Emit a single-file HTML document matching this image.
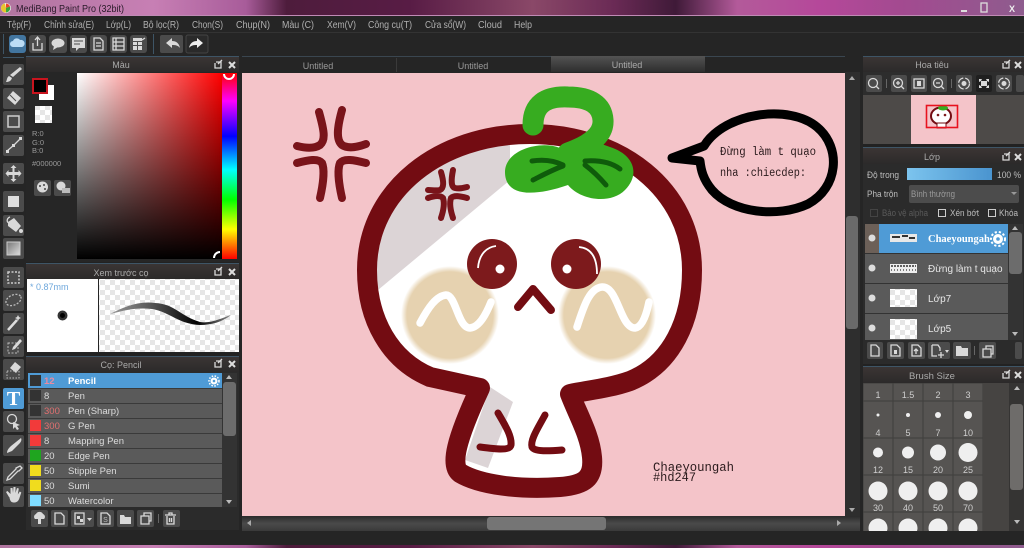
<!DOCTYPE html>
<html><head><meta charset="utf-8"><style>
html,body{margin:0;padding:0;width:1024px;height:548px;overflow:hidden;background:#252525}
svg{display:block}
text{font-family:"Liberation Sans","DejaVu Sans",sans-serif;font-size:9.5px;fill:#bdbdbd}
.m{font-size:10px;fill:#b0b0b0}
.c{text-anchor:middle}
.b{fill:#4b4b4b}
.i{fill:#d9d9d9}
.s{fill:none;stroke:#d9d9d9;stroke-width:1.3}
.w{font-size:9.5px;fill:#dcdcdc}
.d{fill:#565452;stroke:#3f3e3c;stroke-width:1}
.l{font-size:9px;fill:#cfcfcf;text-anchor:middle}
.o{fill:#efefef}
</style></head><body>
<svg width="1024" height="548" viewBox="0 0 1024 548" xmlns="http://www.w3.org/2000/svg">
<defs>
<linearGradient id="tb" x1="0" x2="1" y1="0" y2="0">
<stop offset="0" stop-color="#b0759f"/><stop offset=".15" stop-color="#c77fb4"/><stop offset=".24" stop-color="#a85c9a"/><stop offset=".28" stop-color="#4e1c3c"/><stop offset=".4" stop-color="#581c45"/><stop offset=".52" stop-color="#8a4868"/><stop offset=".6" stop-color="#6a2a55"/><stop offset=".66" stop-color="#3f1a38"/><stop offset=".72" stop-color="#b35a9a"/><stop offset=".8" stop-color="#b5489a"/><stop offset=".88" stop-color="#a34a90"/><stop offset="1" stop-color="#8e5c8e"/>
</linearGradient>
<linearGradient id="sv1" x1="0" x2="1" y1="0" y2="0"><stop offset="0" stop-color="#fff"/><stop offset="1" stop-color="#f00"/></linearGradient>
<linearGradient id="sv2" x1="0" x2="0" y1="0" y2="1"><stop offset="0" stop-color="#000" stop-opacity="0"/><stop offset="1" stop-color="#000"/></linearGradient>
<linearGradient id="hue" x1="0" x2="0" y1="0" y2="1">
<stop offset="0" stop-color="#f00"/><stop offset=".15" stop-color="#f0f"/><stop offset=".34" stop-color="#00f"/><stop offset=".52" stop-color="#0ff"/><stop offset=".68" stop-color="#0f0"/><stop offset=".84" stop-color="#ff0"/><stop offset="1" stop-color="#f00"/>
</linearGradient>
<linearGradient id="hd" x1="0" x2="0" y1="0" y2="1"><stop offset="0" stop-color="#3b3534"/><stop offset="1" stop-color="#2c2a2a"/></linearGradient>
<linearGradient id="tab" x1="0" x2="0" y1="0" y2="1"><stop offset="0" stop-color="#535353"/><stop offset="1" stop-color="#2e2e2e"/></linearGradient>
<linearGradient id="sb" x1="0" x2="0" y1="0" y2="1"><stop offset="0" stop-color="#2b2b2b"/><stop offset=".5" stop-color="#4a4a4a"/><stop offset="1" stop-color="#3a3a3a"/></linearGradient>
<linearGradient id="op" x1="0" x2="1" y1="0" y2="0"><stop offset="0" stop-color="#7cc4ee"/><stop offset="1" stop-color="#4a94cf"/></linearGradient>
<linearGradient id="gr" x1="0" x2="1" y1="0" y2="1"><stop offset="0" stop-color="#777"/><stop offset="1" stop-color="#ddd"/></linearGradient>
<linearGradient id="st" x1="0" x2="1" y1="0" y2="0"><stop offset="0" stop-color="#999"/><stop offset=".35" stop-color="#555"/><stop offset=".72" stop-color="#000"/><stop offset="1" stop-color="#888"/></linearGradient>
<radialGradient id="bl"><stop offset="0" stop-color="#e6d2b0"/><stop offset=".88" stop-color="#e6d2b0"/><stop offset="1" stop-color="#e6d2b0" stop-opacity="0"/></radialGradient>
<pattern id="ck" width="10" height="10" patternUnits="userSpaceOnUse"><rect width="10" height="10" fill="#fff"/><rect width="5" height="5" fill="#e6e6e6"/><rect x="5" y="5" width="5" height="5" fill="#e6e6e6"/></pattern>
<clipPath id="gridclip"><rect x="863" y="383" width="120" height="148"/></clipPath>
<clipPath id="lclip"><rect x="865" y="224" width="143" height="116"/></clipPath>
</defs>

<!-- window chrome -->
<rect width="1024" height="548" fill="#252525"/>
<rect width="1024" height="15" fill="url(#tb)"/>
<rect y="15" width="1024" height="1" fill="#c08ab5"/>
<rect y="545" width="1024" height="3" fill="url(#tb)"/>
<circle cx="6" cy="8" r="5" fill="#f2f2f2"/><path d="M6 3.5a4.5 4.5 0 0 1 4 3L6 8z" fill="#e8452c"/><path d="M10 6.5a4.5 4.5 0 0 1-4 6L6 8z" fill="#3aa63a"/><path d="M6 12.5a4.5 4.5 0 0 1-1-9L6 8z" fill="#e8c52c"/>
<text x="16" y="12" textLength="108" lengthAdjust="spacingAndGlyphs" style="font-size:10px;fill:#2a1a2a">MediBang Paint Pro (32bit)</text>
<rect x="961" y="10" width="6" height="2" fill="#ddd"/><rect x="981" y="3" width="6" height="9" fill="none" stroke="#ddd" stroke-width="1.3"/><text x="1012" y="12" class="c" style="font-size:9px;fill:#eee;font-weight:bold">X</text>

<!-- menu -->
<text class="m" x="7" y="28" textLength="24" lengthAdjust="spacingAndGlyphs">Tệp(F)</text><text class="m" x="44" y="28" textLength="50" lengthAdjust="spacingAndGlyphs">Chỉnh sửa(E)</text><text class="m" x="106" y="28" textLength="25" lengthAdjust="spacingAndGlyphs">Lớp(L)</text><text class="m" x="143" y="28" textLength="36" lengthAdjust="spacingAndGlyphs">Bộ lọc(R)</text><text class="m" x="192" y="28" textLength="31" lengthAdjust="spacingAndGlyphs">Chọn(S)</text><text class="m" x="236" y="28" textLength="34" lengthAdjust="spacingAndGlyphs">Chụp(N)</text><text class="m" x="282" y="28" textLength="32" lengthAdjust="spacingAndGlyphs">Màu (C)</text><text class="m" x="327" y="28" textLength="29" lengthAdjust="spacingAndGlyphs">Xem(V)</text><text class="m" x="368" y="28" textLength="44" lengthAdjust="spacingAndGlyphs">Công cụ(T)</text><text class="m" x="425" y="28" textLength="41" lengthAdjust="spacingAndGlyphs">Cửa sổ(W)</text><text class="m" x="478" y="28" textLength="24" lengthAdjust="spacingAndGlyphs">Cloud</text><text class="m" x="514" y="28" textLength="18" lengthAdjust="spacingAndGlyphs">Help</text>
<rect y="32" width="1024" height="1" fill="#333"/>

<!-- toolbar -->
<rect x="3" y="34" width="1" height="20" fill="#3e5566"/><rect x="153" y="34" width="1" height="20" fill="#3e5566"/>
<rect x="9" y="35" width="17" height="18" rx="3" fill="#42759f"/><path d="M13 47a3 3 0 0 1 0-6 4 4 0 0 1 7-1 3.500 3.500 0 0 1 2 7z" fill="#bcdcf5"/>
<rect class="b" x="29" y="35" width="17" height="18" rx="3"/><path class="s" d="M33 43v7h9v-7M37.500 46v-8M35 40l2.500-3 2.500 3"/>
<rect class="b" x="49" y="35" width="18" height="18" rx="3"/><ellipse class="i" cx="58" cy="43" rx="6.500" ry="4.500"/><path class="i" d="M54 46l-1 4 5-3z"/>
<rect class="b" x="70" y="35" width="17" height="18" rx="3"/><path class="i" d="M72 38h13v10h-6l-3 3v-3h-4z"/><path d="M74 41h9M74 44h6" stroke="#4b4b4b"/>
<rect class="b" x="90" y="35" width="17" height="18" rx="3"/><path class="s" d="M94 38h6l3 3v9h-9zM96 43h5M96 46h5"/>
<rect class="b" x="110" y="35" width="17" height="18" rx="3"/><path class="s" d="M113 38h11v12h-11zM113 42h11M113 46h11M116 38v12"/>
<rect class="b" x="130" y="35" width="17" height="18" rx="3"/><path class="i" d="M133 42h4v3h-4zM138 42h4v3h-4zM133 46h4v4h-4zM138 46h4v4h-4zM133 38h9v3h-9z"/><path class="s" d="M142 40l3-2"/>
<rect class="b" x="160" y="35" width="23" height="18" rx="2"/><path class="i" d="M166 43l6-5v3c4 0 7 2 8 7-2-2.500-4-3-8-3v3z"/>
<rect x="186" y="35" width="22" height="18" rx="2" fill="#2a2a2a" stroke="#444"/><path fill="#eee" d="M203 43l-6-5v3c-4 0-7 2-8 7 2-2.500 4-3 8-3v3z"/>

<!-- tabs -->
<rect x="242" y="56" width="603" height="1" fill="#3a4650"/>
<rect x="396" y="58" width="1" height="14" fill="#3a3a3a"/>
<rect x="551" y="56" width="154" height="16" fill="url(#tab)"/>
<text class="c" x="318" y="69" style="font-size:9px;fill:#999">Untitled</text><text class="c" x="473" y="69" style="font-size:9px;fill:#999">Untitled</text><text class="c" x="627" y="68" style="font-size:9px;fill:#aaa">Untitled</text>

<!-- canvas -->
<rect x="242" y="73" width="603" height="443" fill="#f4c4c9"/>

<!-- head -->
<path fill="#fff" d="M367 270C367 190 440 134 530 134C620 134 692 190 692 270C692 320 672 364 630 381C610 388 590 390 570 394C578 415 590 435 592 457C594 478 585 485 560 487C520 490 480 485 460 473C450 465 456 440 480 388L430 377C390 360 367 320 367 270Z"/>
<path fill="#dcd4d6" d="M378 290L510 180V140L430 150L372 230Z"/>
<path fill="#dcd4d6" d="M490 387L513 402L488 468L465 460Z"/>
<circle cx="450" cy="315" r="49" fill="url(#bl)"/><circle cx="607" cy="315" r="49" fill="url(#bl)"/>
<path fill="none" stroke="#730c12" stroke-width="20" stroke-linejoin="round" d="M367 270C367 190 440 134 530 134C620 134 692 190 692 270C692 320 672 364 630 381C610 388 590 390 570 394C578 415 590 435 592 457C594 478 585 485 560 487C520 490 480 485 460 473C450 465 456 440 480 388L430 377C390 360 367 320 367 270Z"/>
<path fill="none" stroke="#fff" stroke-width="7.500" stroke-linecap="round" stroke-linejoin="round" d="M420 323C428 308 436 296 446 295C456 295 458 328 470 328C480 327 487 312 491 302"/>
<path fill="none" stroke="#fff" stroke-width="7.500" stroke-linecap="round" stroke-linejoin="round" d="M577 327C584 305 590 288 602 287C618 286 620 328 635 328C643 327 647 312 649 302"/>
<circle cx="492" cy="264" r="25" fill="#7d1a1c"/><circle cx="576" cy="264" r="25" fill="#7d1a1c"/>
<circle cx="500" cy="269" r="4.500" fill="#fff"/><circle cx="567" cy="269" r="4.500" fill="#fff"/>
<path fill="none" stroke="#fff" stroke-width="1.800" d="M478 268C479 254 487 247 496 246"/>
<path fill="none" stroke="#fff" stroke-width="1.800" d="M579 247C590 248 597 256 597 274"/>
<path fill="none" stroke="#730c12" stroke-width="8" stroke-linecap="round" stroke-linejoin="round" d="M518 307L533 289L551 310"/>
<path fill="none" stroke="#730c12" stroke-width="7" stroke-linecap="round" stroke-linejoin="round" d="M498 413C505 425 512 436 511 445C510 451 495 449 480 447"/>
<path fill="none" stroke="#730c12" stroke-width="7" stroke-linecap="round" stroke-linejoin="round" d="M545 415C538 428 530 440 532 447C534 452 550 451 562 450"/>
<!-- anger marks -->
<g fill="none" stroke="#79141a" stroke-width="8" stroke-linecap="round">
<path d="M319 112C324 130 326 140 320 145C314 149 305 148 297 146"/><path d="M342 110C337 128 336 140 342 145C348 149 358 147 366 144"/><path d="M297 163C308 160 318 158 322 163C325 170 323 185 320 198"/><path d="M366 163C354 160 344 158 340 163C337 170 339 185 342 198"/>
</g>
<g fill="none" stroke="#79141a" stroke-width="6" stroke-linecap="round">
<path d="M441 172C444 182 444 188 440 190C436 191 432 190 428 190"/><path d="M453 170C451 180 451 187 455 188C459 189 463 188 467 187"/><path d="M428 198C434 196 440 195 443 198C445 204 443 212 441 218"/><path d="M467 198C460 196 454 195 451 198C449 204 451 212 453 218"/>
</g>
<!-- leaf -->
<path fill="#37ac20" d="M560 148C540 140 505 150 505 172C505 195 530 198 568 185C580 200 610 205 625 190C640 175 635 155 610 147L585 138L570 150Z"/>
<path fill="none" stroke="#37ac20" stroke-width="21" stroke-linecap="round" stroke-linejoin="round" d="M533 125C533 105 545 96 568 97C590 97 602 105 603 120C604 135 590 145 568 153"/>
<g fill="none" stroke="#0f5c0b" stroke-width="5" stroke-linecap="round">
<path d="M532 161C545 159 555 161 563 165"/><path d="M563 166C552 170 541 176 533 180"/>
<path d="M585 161C600 160 612 163 620 169"/><path d="M585 165C593 171 600 178 606 185"/>
</g>
<!-- bubble -->
<path fill="none" stroke="#000" stroke-width="9" stroke-linejoin="round" stroke-linecap="round" d="M704 146C725 112 790 104 817 127C842 148 838 188 808 204C778 218 732 213 712 190C703 179 701 170 700 161L672 158Z"/>
<text x="720" y="155" textLength="96" lengthAdjust="spacingAndGlyphs" style="font-family:'Liberation Mono',monospace;font-size:11.500px;fill:#2a1a1c">Đừng làm t quạo</text>
<text x="720" y="176" textLength="86" lengthAdjust="spacingAndGlyphs" style="font-family:'Liberation Mono',monospace;font-size:11.500px;fill:#2a1a1c">nha :chiecdep:</text>
<text x="653" y="471" textLength="81" lengthAdjust="spacingAndGlyphs" style="font-family:'Liberation Mono',monospace;font-size:13px;fill:#2a1a1c">Chaeyoungah</text>
<text x="653" y="481" textLength="43" lengthAdjust="spacingAndGlyphs" style="font-family:'Liberation Mono',monospace;font-size:13px;fill:#2a1a1c">#hd247</text>

<!-- canvas scrollbars -->
<rect x="845" y="72" width="15" height="444" fill="#2e2e2e"/><rect x="846" y="216" width="12" height="113" rx="3" fill="#6a6a6a"/>
<path d="M849 80l3-4 3 4z" fill="#aaa"/><path d="M849 508l3 4 3-4z" fill="#aaa"/>
<rect x="242" y="516" width="618" height="15" fill="url(#sb)"/><rect x="487" y="517" width="119" height="13" rx="3" fill="#757575"/>
<path d="M247 523l4-3v6z" fill="#aaa"/><path d="M841 523l-4-3v6z" fill="#aaa"/>

<!-- tool column -->
<rect x="3" y="57" width="21" height="1" fill="#3e5566"/>
<g class="b">
<rect x="3" y="64" width="21" height="21" rx="2"/><rect x="3" y="88" width="21" height="21" rx="2"/><rect x="3" y="111" width="21" height="21" rx="2"/><rect x="3" y="135" width="21" height="21" rx="2"/><rect x="3" y="163" width="21" height="21" rx="2"/><rect x="3" y="191" width="21" height="21" rx="2"/><rect x="3" y="215" width="21" height="21" rx="2"/><rect x="3" y="238" width="21" height="21" rx="2"/><rect x="3" y="267" width="21" height="21" rx="2"/><rect x="3" y="290" width="21" height="21" rx="2"/><rect x="3" y="313" width="21" height="21" rx="2"/><rect x="3" y="336" width="21" height="21" rx="2"/><rect x="3" y="359" width="21" height="21" rx="2"/><rect x="3" y="411" width="21" height="21" rx="2"/><rect x="3" y="435" width="21" height="21" rx="2"/><rect x="3" y="463" width="21" height="21" rx="2"/><rect x="3" y="486" width="21" height="21" rx="2"/>
</g>
<rect x="3" y="388" width="21" height="21" rx="2" fill="#4f9bd6"/>
<path class="i" d="M20 67l2 2-9 8-3-2zM9 76l3 2c-1 3-3 4-6 4 1-2 1-5 3-6z"/>
<path class="i" d="M13 91l8 7-6 7-8-7z"/><path d="M10 95l6 6" stroke="#4b4b4b" stroke-width="1"/>
<rect x="8" y="116" width="11" height="11" fill="none" stroke="#d0d0d0" stroke-width="1.500"/>
<path class="s" d="M7 151l7-6 6-6" stroke-width="1.600"/><rect x="6" y="150" width="3" height="3" class="i"/><rect x="12" y="144" width="3" height="3" class="i"/><rect x="19" y="137" width="3" height="3" class="i"/>
<path class="i" d="M13.500 165l3 3h-2v4h4v-2l3 3.500-3 3.500v-2h-4v4h2l-3 3-3-3h2v-4h-4v2l-3-3.500 3-3.500v2h4v-4h-2z"/>
<rect x="8" y="196" width="11" height="11" fill="#dedede"/>
<path class="i" d="M8 222l6-4 7 8-5 6-8-6z"/><path d="M10 217c-3 1-4 5-1 6" class="s"/><circle cx="21" cy="231" r="2" class="i"/>
<rect x="7" y="242" width="13" height="13" fill="url(#gr)" stroke="#ccc"/>
<rect x="8" y="272" width="11" height="11" fill="none" stroke="#ccc" stroke-width="1.500" stroke-dasharray="2 1.500"/>
<ellipse cx="13.500" cy="300" rx="8" ry="5" transform="rotate(-25 13.500 300)" fill="none" stroke="#bbb" stroke-width="1.300" stroke-dasharray="2 1.500"/>
<path d="M8 330l9-10" stroke="#ddd" stroke-width="2.500"/><path d="M18 315l1 2 2 1-2 1-1 2-1-2-2-1 2-1z" class="i"/>
<rect x="8" y="343" width="10" height="10" fill="none" stroke="#bbb" stroke-dasharray="2 1.500"/><path class="i" d="M20 339l2 2-7 8-3 1 1-3z"/>
<path class="i" d="M15 362l6 5-5 6-6-5z"/><rect x="7" y="371" width="12" height="7" fill="none" stroke="#bbb" stroke-dasharray="1.500 1.500"/>
<text x="13.500" y="405" text-anchor="middle" style="font-family:'Liberation Serif',serif;font-size:20px;font-weight:bold;fill:#fff">T</text>
<circle cx="12" cy="419" r="4.500" class="s"/><path class="i" d="M13 422l7 3-3 1 2 3-2 1-2-3-2 2z"/>
<path class="i" d="M21 438c1 2 0 4-2 6l-7 7-5 2c0-3 2-5 4-7z"/>
<path class="s" d="M20 466l2 2-3 3-1 0-8 8-3 1 1-3 8-8v-1z"/>
<path class="i" d="M9 497l-3-5 1.500-1 3 3 0-6 2 0 .5 5 .5-6 2 0 0 6 1.500-5 1.800.5-1 6 2-3 1.500 1-2 6c-1 3-3 4-5 4-3 0-4-1-5-5.500z"/>

<!-- Panels: colour -->
<rect x="26" y="56" width="213" height="1" fill="#3e5566"/>
<rect x="26" y="57" width="213" height="15" fill="url(#hd)"/>
<text class="c" x="121" y="68" style="font-size:9px;fill:#aaa">Màu</text>
<path class="s" d="M216 62h5v6h-6v-5M218 64l4-4" stroke-width="1"/><path d="M229 62l6 6M235 62l-6 6" stroke="#ddd" stroke-width="2"/>
<rect x="26" y="72" width="213" height="190" fill="#262626"/>
<rect x="77" y="73" width="145" height="186" fill="url(#sv1)"/><rect x="77" y="73" width="145" height="186" fill="url(#sv2)"/>
<rect x="222" y="73" width="15" height="186" fill="url(#hue)"/>
<path d="M224 74a5 5 0 0 0 10 0" fill="none" stroke="#fff" stroke-width="2"/>
<path d="M214 258a6 6 0 0 1 6-6" fill="none" stroke="#fff" stroke-width="2"/>
<rect x="39" y="85" width="15" height="15" fill="#fff"/>
<rect x="33" y="79" width="14" height="14" fill="#000" stroke="#c8141e" stroke-width="2"/>
<rect x="35" y="106" width="17" height="17" fill="url(#ck)"/>
<text x="32" y="136" style="font-size:7.500px;fill:#999">R:0</text><text x="32" y="145" style="font-size:7.500px;fill:#999">G:0</text><text x="32" y="153" style="font-size:7.500px;fill:#999">B:0</text><text x="32" y="166" style="font-size:7.500px;fill:#999">#000000</text>
<rect class="b" x="34" y="180" width="17" height="16" rx="2"/><circle cx="42.500" cy="187" r="5.500" class="i"/><circle cx="40" cy="186" r="1" fill="#444"/><circle cx="44" cy="185" r="1" fill="#444"/><circle cx="45" cy="189" r="1" fill="#444"/>
<rect class="b" x="54" y="180" width="17" height="16" rx="2"/><circle cx="61" cy="186" r="4.500" class="i"/><rect x="62" y="188" width="8" height="5" fill="#bbb"/>
<rect y="262" x="26" width="213" height="3" fill="#222"/>
<!-- preview -->
<rect x="26" y="263" width="213" height="1" fill="#3e5566"/>
<rect x="26" y="264" width="213" height="15" fill="url(#hd)"/>
<text class="c" x="121" y="276" style="font-size:9px;fill:#aaa">Xem trước cọ</text>
<path class="s" d="M216 269h5v6h-6v-5M218 271l4-4" stroke-width="1"/><path d="M229 269l6 6M235 269l-6 6" stroke="#ddd" stroke-width="2"/>
<rect x="27" y="279" width="71" height="73" fill="#fff"/>
<rect x="99" y="279" width="140" height="73" fill="url(#ck)"/>
<text x="30" y="290" style="font-size:9px;fill:#6fa8dc">* 0.87mm</text>
<circle cx="62.500" cy="315.500" r="5" fill="#333"/><circle cx="62.500" cy="315.500" r="2.500" fill="#000"/>
<path fill="url(#st)" d="M110 314C125 306 140 301 155 303C175 304 180 316 200 322C210 324 222 318 231 315C222 322 212 325 200 325C178 324 170 312 152 309C135 307 122 311 110 314Z"/>
<!-- brush panel -->
<rect x="26" y="353" width="213" height="3" fill="#222"/>
<rect x="26" y="356" width="213" height="1" fill="#3e5566"/>
<rect x="26" y="357" width="213" height="15" fill="url(#hd)"/>
<text class="c" x="121" y="368" style="font-size:9px;fill:#aaa">Cọ: Pencil</text>
<path class="s" d="M216 361h5v6h-6v-5M218 363l4-4" stroke-width="1"/><path d="M229 361l6 6M235 361l-6 6" stroke="#ddd" stroke-width="2"/>
<rect x="26" y="372" width="213" height="158" fill="#2b2b2b"/>
<rect x="28" y="373" width="194" height="134" fill="#5a5a5a"/>
<rect x="28" y="373" width="194" height="15" fill="#4f9bd6"/>
<g fill="#3a3a3a"><rect x="28" y="388" width="194" height="1"/><rect x="28" y="403" width="194" height="1"/><rect x="28" y="418" width="194" height="1"/><rect x="28" y="433" width="194" height="1"/><rect x="28" y="448" width="194" height="1"/><rect x="28" y="463" width="194" height="1"/><rect x="28" y="478" width="194" height="1"/><rect x="28" y="493" width="194" height="1"/></g>
<rect x="30" y="375" width="11" height="11" fill="#333"/><rect x="30" y="390" width="11" height="11" fill="#333"/><rect x="30" y="405" width="11" height="11" fill="#333"/><rect x="30" y="420" width="11" height="11" fill="#f23a3a"/><rect x="30" y="435" width="11" height="11" fill="#f23a3a"/><rect x="30" y="450" width="11" height="11" fill="#1fa51f"/><rect x="30" y="465" width="11" height="11" fill="#f0dc1e"/><rect x="30" y="480" width="11" height="11" fill="#f0dc1e"/><rect x="30" y="495" width="11" height="11" fill="#7fdcff"/>
<text x="44" y="384" style="font-weight:bold;fill:#e88aa0">12</text><text x="68" y="384" style="font-weight:bold;fill:#fff">Pencil</text>
<text x="44" y="399" class="w">8</text><text x="68" y="399" class="w">Pen</text>
<text x="44" y="414" style="fill:#e07070">300</text><text x="68" y="414" class="w">Pen (Sharp)</text>
<text x="44" y="429" style="fill:#e07070">300</text><text x="68" y="429" class="w">G Pen</text>
<text x="44" y="444" class="w">8</text><text x="68" y="444" class="w">Mapping Pen</text>
<text x="44" y="459" class="w">20</text><text x="68" y="459" class="w">Edge Pen</text>
<text x="44" y="474" class="w">50</text><text x="68" y="474" class="w">Stipple Pen</text>
<text x="44" y="489" class="w">30</text><text x="68" y="489" class="w">Sumi</text>
<text x="44" y="504" class="w">50</text><text x="68" y="504" class="w">Watercolor</text>
<circle cx="214" cy="381" r="3.500" fill="#fff"/><circle cx="214" cy="381" r="5" fill="none" stroke="#fff" stroke-width="1.500" stroke-dasharray="1.500 1.500"/><circle cx="214" cy="381" r="1.300" fill="#4f9bd6"/>
<rect x="222" y="373" width="15" height="134" fill="#333"/><rect x="223" y="382" width="13" height="54" rx="3" fill="#6c6c6c"/>
<path d="M226 379l3-4 3 4z" fill="#bbb"/><path d="M226 500l3 4 3-4z" fill="#bbb"/>
<g class="b"><rect x="31" y="510" width="17" height="17" rx="2"/><rect x="51" y="510" width="17" height="17" rx="2"/><rect x="71" y="510" width="23" height="17" rx="2"/><rect x="97" y="510" width="17" height="17" rx="2"/><rect x="117" y="510" width="17" height="17" rx="2"/><rect x="137" y="510" width="17" height="17" rx="2"/><rect x="163" y="510" width="17" height="17" rx="2"/></g>
<path class="i" d="M35 519a3 3 0 0 1 1-5 4 4 0 0 1 7 0 3 3 0 0 1 1 5h-3v5h-3v-5z"/>
<path class="s" d="M55 513h6l3 3v8h-9z"/>
<path class="s" d="M75 513h9v11h-9z"/><rect x="77" y="516" width="3" height="3" class="i"/><rect x="80" y="519" width="3" height="3" class="i"/><path d="M87 518h5l-2.500 3z" class="i"/>
<path class="s" d="M101 513h6l3 3v8h-9z"/><text x="105.500" y="522" class="c" style="font-size:7px">S</text>
<path class="i" d="M120 515h4l1 2h6v7h-11z"/>
<path class="s" d="M141 516h8v8h-8zM144 516v-3h7v8h-2"/>
<rect x="158" y="514" width="1" height="9" fill="#666"/>
<path class="s" d="M167 516v8h7v-8M165 515h11M169 515v-2h3v2M169.500 518v4M171.500 518v4"/>
<rect y="531" width="240" height="14" fill="#252525"/>

<!-- Right: navigator -->
<rect x="863" y="56" width="161" height="1" fill="#3e5566"/>
<rect x="863" y="57" width="161" height="15" fill="url(#hd)"/>
<text class="c" x="932" y="68" style="font-size:9px;fill:#aaa">Hoa tiêu</text>
<path class="s" d="M1004 62h5v6h-6v-5M1006 64l4-4" stroke-width="1"/><path d="M1015 62l6 6M1021 62l-6 6" stroke="#ddd" stroke-width="2"/>
<rect x="863" y="72" width="161" height="23" fill="#2d2d2d"/>
<g class="b"><rect x="866" y="75" width="16" height="17" rx="2"/><rect x="891" y="75" width="16" height="17" rx="2"/><rect x="911" y="75" width="16" height="17" rx="2"/><rect x="931" y="75" width="16" height="17" rx="2"/><rect x="956" y="75" width="16" height="17" rx="2"/><rect x="996" y="75" width="16" height="17" rx="2"/><rect x="1016" y="75" width="8" height="17" rx="2"/></g>
<rect x="976" y="75" width="16" height="17" rx="2" fill="#1f1f1f"/>
<rect x="886" y="79" width="1" height="9" fill="#666"/><rect x="951" y="79" width="1" height="9" fill="#666"/>
<circle cx="873" cy="83" r="4.500" class="s"/><path d="M876 86l3 3" class="s"/>
<circle cx="898" cy="83" r="4.500" class="s"/><path d="M901 86l3 3M896 83h4M898 81v4" class="s"/>
<rect x="914" y="79" width="10" height="9" class="s"/><path class="i" d="M917 81h4v5h-4z"/>
<circle cx="938" cy="83" r="4.500" class="s"/><path d="M941 86l3 3M936 83h4" class="s"/>
<circle cx="964" cy="83.500" r="5.500" class="s" stroke-dasharray="7 2"/><circle cx="964" cy="83.500" r="2.500" class="i"/>
<path class="i" d="M979 79h3l-1 2h6l-1-2h3v3l-2-1v5l2-1v3h-3l1-2h-6l1 2h-3v-3l2 1v-5l-2 1z"/>
<circle cx="1004" cy="83.500" r="5.500" class="s" stroke-dasharray="7 2"/><circle cx="1004" cy="83.500" r="2.500" class="i"/>
<rect x="863" y="95" width="161" height="49" fill="#4d4a48"/>
<rect x="911" y="95" width="65" height="49" fill="#f4c4c9"/>
<ellipse cx="941" cy="116" rx="10" ry="8.500" fill="#fff" stroke="#730c12" stroke-width="2"/><rect x="937" y="123" width="9" height="5" fill="#fff" stroke="#730c12"/>
<ellipse cx="943" cy="108" rx="5" ry="2.500" fill="#37ac20"/><circle cx="938" cy="115" r="1.300" fill="#7d1a1c"/><circle cx="945" cy="115" r="1.300" fill="#7d1a1c"/>
<rect x="926.500" y="105.500" width="31" height="22" fill="none" stroke="#e8121e" stroke-width="1.600"/>
<rect x="863" y="144" width="161" height="4" fill="#222"/>
<!-- Layer panel -->
<rect x="863" y="147" width="161" height="1" fill="#3e5566"/>
<rect x="863" y="148" width="161" height="16" fill="url(#hd)"/>
<text class="c" x="932" y="160" style="font-size:9px;fill:#aaa">Lớp</text>
<path class="s" d="M1004 154h5v6h-6v-5M1006 156l4-4" stroke-width="1"/><path d="M1015 154l6 6M1021 154l-6 6" stroke="#ddd" stroke-width="2"/>
<rect x="863" y="164" width="161" height="200" fill="#2b2b2b"/>
<text x="867" y="178" textLength="32" lengthAdjust="spacingAndGlyphs" style="font-size:9.500px">Độ trong</text>
<rect x="907" y="168" width="85" height="12" fill="url(#op)"/>
<text x="997" y="178" textLength="24" lengthAdjust="spacingAndGlyphs" style="font-size:9.500px">100 %</text>
<text x="867" y="197" textLength="31" lengthAdjust="spacingAndGlyphs" style="font-size:9.500px">Pha trộn</text>
<rect x="909" y="185" width="110" height="18" rx="2" fill="#4c4c4c"/>
<text x="911" y="197" textLength="44" lengthAdjust="spacingAndGlyphs" style="font-size:9.500px;fill:#9a9a9a">Bình thường</text>
<path d="M1011 192h6l-3 3z" fill="#999"/>
<rect x="870.500" y="209.500" width="7" height="7" fill="none" stroke="#444"/>
<text x="882" y="216" textLength="46" lengthAdjust="spacingAndGlyphs" style="font-size:9px;fill:#5a5a5a">Bảo vệ alpha</text>
<rect x="938.500" y="209.500" width="7" height="7" fill="none" stroke="#ccc"/>
<text x="950" y="216" textLength="29" lengthAdjust="spacingAndGlyphs" style="font-size:9px">Xén bớt</text>
<rect x="988.500" y="209.500" width="7" height="7" fill="none" stroke="#ccc"/>
<text x="999" y="216" textLength="19" lengthAdjust="spacingAndGlyphs" style="font-size:9px">Khóa</text>
<g clip-path="url(#lclip)">
<rect x="865" y="224" width="143" height="116" fill="#5a5a5a"/>
<rect x="865" y="224" width="14" height="29" fill="#6c6058"/>
<rect x="879" y="224" width="129" height="29" fill="#4f9bd6"/>
<rect x="865" y="253" width="143" height="1" fill="#333"/><rect x="865" y="283" width="143" height="1" fill="#333"/><rect x="865" y="313" width="143" height="1" fill="#333"/>
<circle cx="872" cy="238" r="3.500" fill="#ddd"/><circle cx="872" cy="268" r="3.500" fill="#ddd"/><circle cx="872" cy="298" r="3.500" fill="#ddd"/><circle cx="872" cy="328" r="3.500" fill="#ddd"/>
<rect x="890" y="234" width="27" height="8" fill="#e8e8e8"/><path d="M892 237h8M902 236h6M909 238h6" stroke="#333" stroke-width="2"/>
<rect x="890" y="264" width="27" height="9" fill="#eee"/><path d="M891 266h25" stroke="#333" stroke-width="1.500" stroke-dasharray="2 1"/><path d="M891 270h25" stroke="#555" stroke-width="1.500" stroke-dasharray="1 2"/>
<rect x="890" y="289" width="27" height="18" fill="url(#ck)"/>
<rect x="890" y="319" width="27" height="20" fill="url(#ck)"/>
<text x="928" y="242" style="font-family:'Liberation Serif',serif;font-size:10.500px;font-weight:bold;fill:#fff">Chaeyoungah</text>
<text x="928" y="272" style="font-size:10px;fill:#e6e6e6">Đừng làm t quạo</text>
<text x="928" y="302" style="font-size:10px;fill:#e6e6e6">Lớp7</text>
<text x="928" y="332" style="font-size:10px;fill:#e6e6e6">Lớp5</text>
<circle cx="998" cy="239" r="5" fill="#fff"/><circle cx="998" cy="239" r="7" fill="none" stroke="#fff" stroke-width="2" stroke-dasharray="2.200 2"/><circle cx="998" cy="239" r="1.800" fill="#4f9bd6"/>
</g>
<rect x="1008" y="224" width="15" height="116" fill="#333"/><rect x="1009" y="232" width="13" height="42" rx="3" fill="#6c6c6c"/>
<path d="M1012 230l3-4 3 4z" fill="#bbb"/><path d="M1012 332l3 4 3-4z" fill="#bbb"/>
<g class="b"><rect x="867" y="342" width="16" height="17" rx="2"/><rect x="887" y="342" width="17" height="17" rx="2"/><rect x="908" y="342" width="17" height="17" rx="2"/><rect x="928" y="342" width="22" height="17" rx="2"/><rect x="953" y="342" width="18" height="17" rx="2"/><rect x="979" y="342" width="17" height="17" rx="2"/><rect x="1015" y="342" width="7" height="17" rx="2"/></g>
<path class="s" d="M871 345h5l3 3v8h-8z"/>
<path class="s" d="M891 345h6l3 3v8h-9z"/><rect x="894" y="350" width="3" height="4" class="i"/>
<path class="s" d="M912 345h6l3 3v8h-9z"/><path d="M916 354v-5M914 351l2-2 2 2" class="s"/>
<path class="s" d="M932 345h6l2 3v3M932 345v11h5"/><path d="M941 352v6M938 355h6" class="s"/><path d="M945 350h4l-2 3z" class="i"/>
<path class="i" d="M956 346h5l1 2h6v8h-12z"/>
<path class="s" d="M983 349h8v8h-8zM986 349v-3h7v8h-2"/>
<rect x="974" y="346" width="1" height="9" fill="#666"/>
<!-- Brush size -->
<rect x="863" y="364" width="161" height="3" fill="#222"/>
<rect x="863" y="366" width="161" height="1" fill="#3e5566"/>
<rect x="863" y="367" width="161" height="16" fill="url(#hd)"/>
<text class="c" x="932" y="379" style="font-size:9.500px;fill:#aaa">Brush Size</text>
<path class="s" d="M1004 372h5v6h-6v-5M1006 374l4-4" stroke-width="1"/><path d="M1015 372l6 6M1021 372l-6 6" stroke="#ddd" stroke-width="2"/>
<rect x="863" y="383" width="146" height="148" fill="#464442"/>
<g clip-path="url(#gridclip)">
<rect class="d" x="863" y="383" width="30" height="18"/><rect class="d" x="893" y="383" width="30" height="18"/><rect class="d" x="923" y="383" width="30" height="18"/><rect class="d" x="953" y="383" width="30" height="18"/>
<rect class="d" x="863" y="401" width="30" height="37"/><rect class="d" x="893" y="401" width="30" height="37"/><rect class="d" x="923" y="401" width="30" height="37"/><rect class="d" x="953" y="401" width="30" height="37"/>
<rect class="d" x="863" y="438" width="30" height="37"/><rect class="d" x="893" y="438" width="30" height="37"/><rect class="d" x="923" y="438" width="30" height="37"/><rect class="d" x="953" y="438" width="30" height="37"/>
<rect class="d" x="863" y="475" width="30" height="37"/><rect class="d" x="893" y="475" width="30" height="37"/><rect class="d" x="923" y="475" width="30" height="37"/><rect class="d" x="953" y="475" width="30" height="37"/>
<rect class="d" x="863" y="512" width="30" height="37"/><rect class="d" x="893" y="512" width="30" height="37"/><rect class="d" x="923" y="512" width="30" height="37"/><rect class="d" x="953" y="512" width="30" height="37"/>
<text class="l" x="878" y="398">1</text><text class="l" x="908" y="398">1.5</text><text class="l" x="938" y="398">2</text><text class="l" x="968" y="398">3</text>
<circle class="o" cx="878" cy="415" r="1.500"/><circle class="o" cx="908" cy="415" r="2"/><circle class="o" cx="938" cy="415" r="3"/><circle class="o" cx="968" cy="415" r="4"/>
<text class="l" x="878" y="436">4</text><text class="l" x="908" y="436">5</text><text class="l" x="938" y="436">7</text><text class="l" x="968" y="436">10</text>
<circle class="o" cx="878" cy="452.500" r="5"/><circle class="o" cx="908" cy="452.500" r="6"/><circle class="o" cx="938" cy="452.500" r="8"/><circle class="o" cx="968" cy="452.500" r="9.500"/>
<text class="l" x="878" y="473">12</text><text class="l" x="908" y="473">15</text><text class="l" x="938" y="473">20</text><text class="l" x="968" y="473">25</text>
<circle class="o" cx="878" cy="491" r="9.500"/><circle class="o" cx="908" cy="491" r="9.500"/><circle class="o" cx="938" cy="491" r="9.500"/><circle class="o" cx="968" cy="491" r="9.500"/>
<text class="l" x="878" y="511">30</text><text class="l" x="908" y="511">40</text><text class="l" x="938" y="511">50</text><text class="l" x="968" y="511">70</text>
<circle class="o" cx="878" cy="528" r="9.500"/><circle class="o" cx="908" cy="528" r="9.500"/><circle class="o" cx="938" cy="528" r="9.500"/><circle class="o" cx="968" cy="528" r="9.500"/>
</g>
<rect x="1009" y="383" width="15" height="148" fill="#353433"/><rect x="1010" y="404" width="13" height="86" rx="3" fill="#6e6c6a"/>
<path d="M1014 390l3-4 3 4z" fill="#bbb"/><path d="M1014 520l3 4 3-4z" fill="#bbb"/>
</svg>
</body></html>
